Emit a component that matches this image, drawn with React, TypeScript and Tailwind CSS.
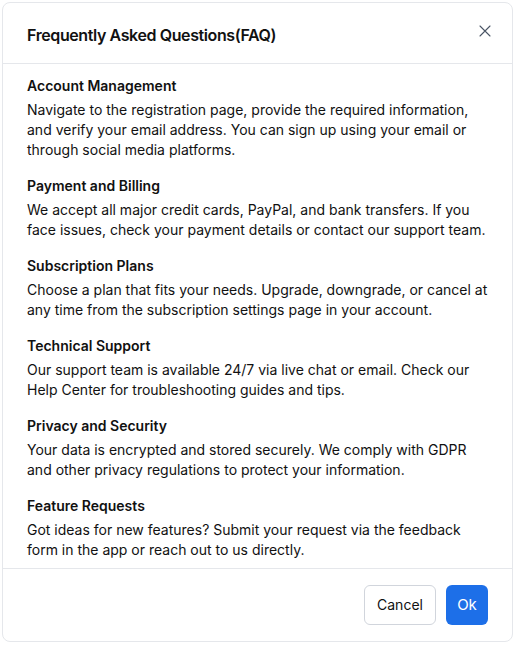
const faqs = [
  {
    q: 'Account Management',
    a: 'Navigate to the registration page, provide the required information, and verify your email address. You can sign up using your email or through social media platforms.',
  },
  {
    q: 'Payment and Billing',
    a: 'We accept all major credit cards, PayPal, and bank transfers. If you face issues, check your payment details or contact our support team.',
  },
  {
    q: 'Subscription Plans',
    a: 'Choose a plan that fits your needs. Upgrade, downgrade, or cancel at any time from the subscription settings page in your account.',
  },
  {
    q: 'Technical Support',
    a: 'Our support team is available 24/7 via live chat or email. Check our Help Center for troubleshooting guides and tips.',
  },
  {
    q: 'Privacy and Security',
    a: 'Your data is encrypted and stored securely. We comply with GDPR and other privacy regulations to protect your information.',
  },
  {
    q: 'Feature Requests',
    a: 'Got ideas for new features? Submit your request via the feedback form in the app or reach out to us directly.',
  },
];

export default function App() {
  return (
    <div className="min-h-screen bg-white p-0.5 font-['Inter','Noto_Sans',sans-serif] text-[#111]">
      <div className="flex h-[640px] w-[511px] flex-col overflow-hidden rounded-lg border border-gray-200 bg-white">
        <div className="flex items-start justify-between border-b border-gray-200 px-6 pb-4 pt-5">
          <h2 className="text-base font-semibold leading-6 tracking-tight">Frequently Asked Questions(FAQ)</h2>
          <button className="mr-[-3px] mt-0.5 text-gray-600" aria-label="Close">
            <svg width="12" height="12" viewBox="0 0 12 12" fill="none" stroke="currentColor" strokeWidth="1.1" strokeLinecap="round">
              <path d="M1 1l10 10M11 1L1 11" />
            </svg>
          </button>
        </div>

        <div className="flex-1 space-y-4 overflow-hidden px-6 pt-3">
          {faqs.map((f) => (
            <div key={f.q}>
              <h3 className="mb-1 text-sm font-semibold leading-5">{f.q}</h3>
              <p className="text-sm leading-5">{f.a}</p>
            </div>
          ))}
        </div>

        <div className="flex justify-end gap-2.5 border-t border-gray-200 px-6 py-4">
          <button className="h-10 w-[72px] rounded-md border border-gray-300 bg-white text-sm">Cancel</button>
          <button className="h-10 w-[42px] rounded-md bg-[#1d6fe8] text-[15px] text-white">Ok</button>
        </div>
      </div>
    </div>
  );
}
